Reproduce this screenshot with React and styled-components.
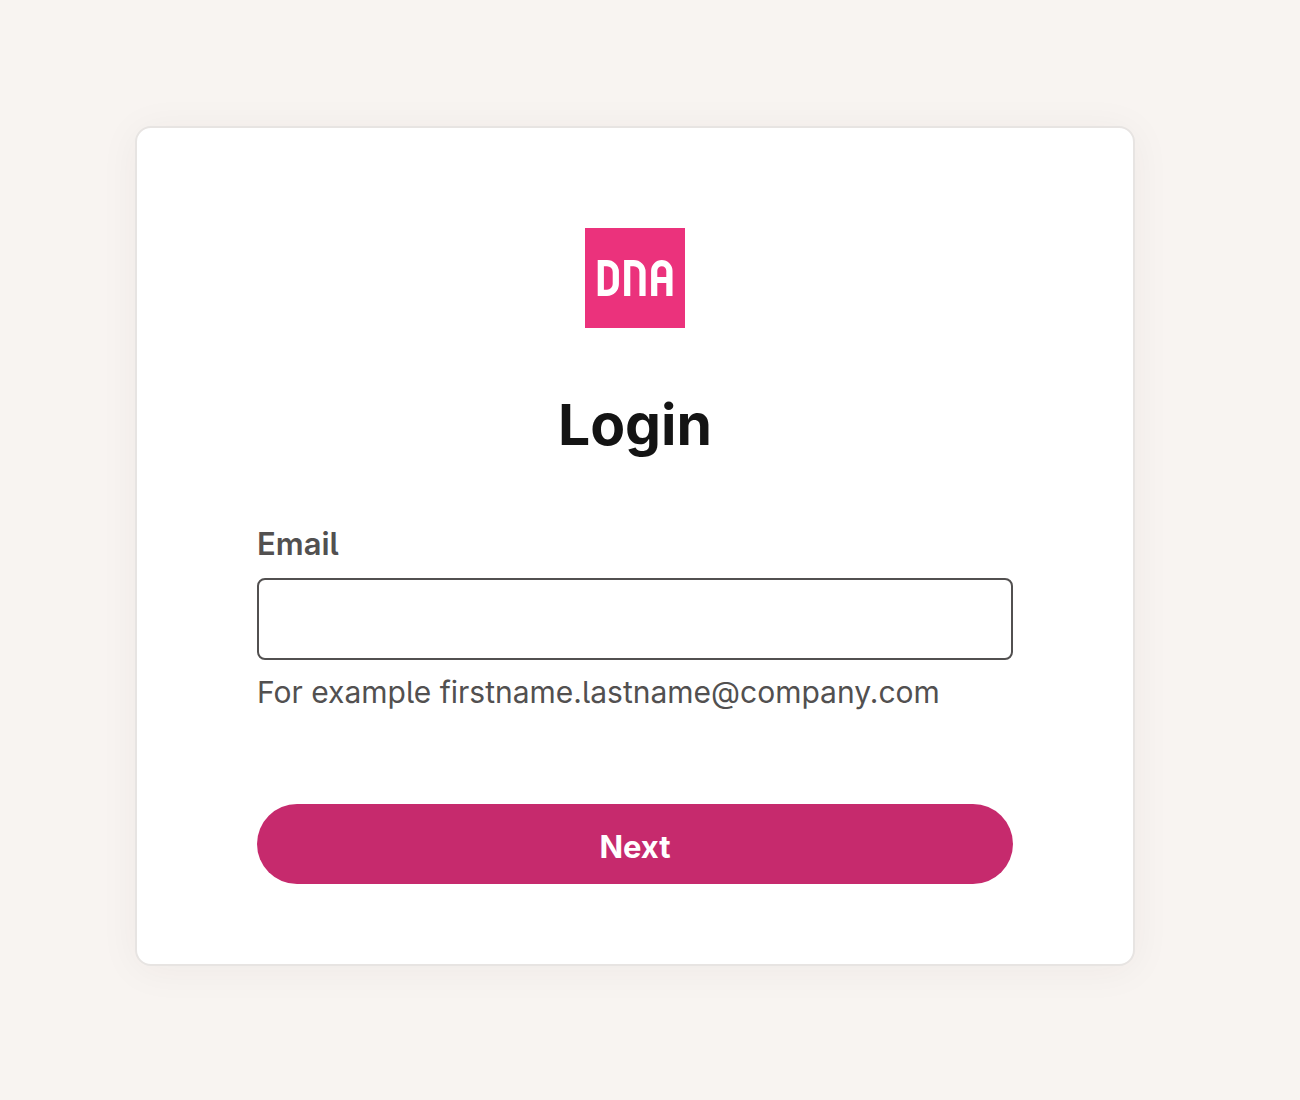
import React from "react";
import styled, { createGlobalStyle } from "styled-components";

const GlobalStyle = createGlobalStyle`
  *, *::before, *::after { box-sizing: border-box; }
  body {
    margin: 0;
    background: #f8f4f1;
    color: #141414;
    font-family: Inter, "Liberation Sans", sans-serif;
    font-feature-settings: "cv05";
  }
`;

const Page = styled.main`
  min-height: 100vh;
  padding: 126px 165px 134px 135px;
`;

const Card = styled.form`
  display: flex;
  flex-direction: column;
  max-width: 1000px;
  margin: 0 auto;
  padding: 100px 120px 80px;
  background: #fff;
  border: 2px solid #e7e4e2;
  border-radius: 16px;
  box-shadow: 0 4px 40px rgba(50, 40, 30, 0.05);
`;

const Logo = styled.svg`
  align-self: center;
  width: 100px;
  height: 100px;
`;

const Title = styled.h1`
  margin: 57px 0 60px;
  font-size: 57px;
  font-weight: 700;
  line-height: 80px;
  text-align: center;
`;

const Field = styled.div`
  display: flex;
  flex-direction: column;
  margin-bottom: 90px;
`;

const Label = styled.label`
  margin-bottom: 15px;
  color: #525050;
  font-size: 31px;
  font-weight: 600;
  line-height: 38px;
`;

const Input = styled.input`
  width: 100%;
  height: 82px;
  padding: 0 24px;
  color: #141414;
  background: #fff;
  border: 2px solid #525050;
  border-radius: 8px;
  font: inherit;
  font-size: 30px;
`;

const Hint = styled.p`
  margin: 10px 0 0;
  color: #525050;
  font-size: 30px;
  line-height: 44px;
`;

const Button = styled.button`
  height: 80px;
  padding: 4px 40px 0;
  color: #fff;
  background: #c62a6d;
  border: 0;
  border-radius: 40px;
  font: inherit;
  font-size: 31px;
  font-weight: 700;
  cursor: pointer;
`;

export default function App() {
  return (
    <>
      <GlobalStyle />
      <Page>
        <Card onSubmit={(event) => event.preventDefault()}>
          <Logo viewBox="0 0 100 100" role="img" aria-label="DNA">
            <rect width="100" height="100" fill="#eb327c" />
            <g fill="none" stroke="#fff" strokeWidth="6.2">
              <path d="M15.8 35.1H22A8.8 8.8 0 0 1 30.8 43.9V56A8.8 8.8 0 0 1 22 64.8H15.8Z" />
              <path d="M42.2 68V35.1H48.7A8.8 8.8 0 0 1 57.5 43.9V68" />
              <path d="M69.2 68V42.8A7.6 7.6 0 0 1 84.4 42.8V68M69.2 52H84.4" />
            </g>
          </Logo>
          <Title>Login</Title>
          <Field>
            <Label htmlFor="email">Email</Label>
            <Input id="email" type="email" aria-describedby="email-hint" />
            <Hint id="email-hint">For example firstname.lastname@company.com</Hint>
          </Field>
          <Button type="submit">Next</Button>
        </Card>
      </Page>
    </>
  );
}
